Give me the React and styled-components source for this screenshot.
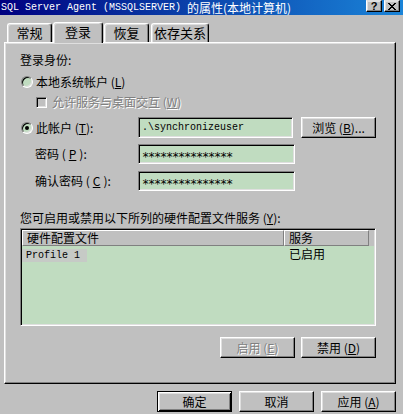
import React from 'react'
import styled, { createGlobalStyle, css } from 'styled-components'

const FACE = '#c0c0c0'
const WINDOW = '#c0dcc0'
const CJK = '"Noto Sans CJK SC", "Liberation Sans", sans-serif'
const MONO = '"Liberation Mono", "Noto Sans CJK SC", monospace'

const GlobalStyle = createGlobalStyle`
  html, body { margin: 0; padding: 0; }
  body {
    background: ${FACE};
    font-family: ${CJK};
    font-size: 12px;
    color: #000;
    overflow: hidden;
  }
`

const raised = css`
  border-style: solid;
  border-width: 1px;
  border-color: #fff #000 #000 #fff;
  box-shadow: inset -1px -1px 0 #808080, inset 1px 1px 0 #dfdfdf;
`

const sunken = css`
  border-style: solid;
  border-width: 1px;
  border-color: #808080 #fff #fff #808080;
  box-shadow: inset 1px 1px 0 #000, inset -1px -1px 0 #dfdfdf;
`

const disabledText = css`
  color: #808080;
  text-shadow: 1px 1px 0 #fff;
`

const Window = styled.div`
  width: 403px;
  height: 414px;
  display: flex;
  flex-direction: column;
  background: ${FACE};
`

const TitleBar = styled.div`
  height: 15px;
  display: flex;
  align-items: flex-start;
  padding: 0 3px 0 1px;
  background: linear-gradient(to right, #000080 0%, #0a3fa8 45%, #1a84d8 100%);
`

const TitleText = styled.div`
  flex: 1;
  height: 15px;
  display: flex;
  align-items: center;
  color: #fff;
  white-space: pre;
`

const TitleLatin = styled.span`
  font-family: ${MONO};
  font-size: 10px;
  line-height: 15px;
`

const TitleCjk = styled.span`
  font-family: ${CJK};
  font-size: 12px;
  line-height: 15px;
`

const CaptionButtons = styled.div`
  display: flex;
  gap: 2px;
`

const CaptionButton = styled.div`
  width: 16px;
  height: 12px;
  box-sizing: border-box;
  ${raised};
  border-top-color: #dfdfdf;
  background: ${FACE};
  display: flex;
  align-items: center;
  justify-content: center;
  font-family: "Liberation Sans", sans-serif;
  font-weight: bold;
  font-size: 11px;
  line-height: 10px;
`

const Body = styled.div`
  flex: 1;
  display: flex;
  flex-direction: column;
  padding: 7px 7px 0 4px;
`

const TabStrip = styled.div`
  height: 20px;
  display: flex;
  align-items: flex-end;
  padding-left: 3px;
`

const Tab = styled.div`
  position: relative;
  width: ${p => p.$w}px;
  height: ${p => (p.$active ? 21 : 19)}px;
  margin-right: ${p => p.$gap || 1}px;
  margin-bottom: ${p => (p.$active ? -1 : 0)}px;
  z-index: ${p => (p.$active ? 1 : 0)};
  box-sizing: border-box;
  background: ${FACE};
  border-top: 1px solid #fff;
  border-left: 1px solid #fff;
  border-right: 1px solid #000;
  border-radius: 3px 3px 0 0;
  box-shadow: inset -1px 0 0 #808080, inset 1px 1px 0 #dfdfdf;
  display: flex;
  align-items: center;
  justify-content: center;
  padding-bottom: ${p => (p.$active ? 2 : 0)}px;
  font-size: 13px;
  line-height: 14px;
`

const Panel = styled.div`
  width: 392px;
  height: 342px;
  box-sizing: border-box;
  ${raised};
  background: ${FACE};
  padding: 0 19px 0 15px;
  display: flex;
  flex-direction: column;
`

const GroupLabel = styled.div`
  margin-top: ${p => p.$top}px;
  height: 14px;
  line-height: 14px;
  white-space: nowrap;
`

const OptionRow = styled.div`
  margin-top: ${p => p.$top}px;
  margin-left: ${p => p.$indent || 0}px;
  height: ${p => p.$h}px;
  display: flex;
  align-items: center;
  gap: ${p => p.$gap || 3}px;
`

const RadioDot = styled.span`
  width: 12px;
  height: 12px;
  box-sizing: border-box;
  border-radius: 50%;
  ${sunken};
  background: ${WINDOW};
  display: flex;
  align-items: center;
  justify-content: center;
  &::after {
    content: '';
    width: 4px;
    height: 4px;
    border-radius: 50%;
    background: ${p => (p.$checked ? '#000' : 'transparent')};
  }
`

const CheckBox = styled.span`
  width: 11px;
  height: 11px;
  box-sizing: border-box;
  ${sunken};
  background: ${FACE};
`

const OptionLabel = styled.span`
  line-height: 14px;
  white-space: nowrap;
  ${p => p.$disabled && disabledText};
`

const FieldRow = styled.div`
  margin-top: ${p => p.$top}px;
  height: ${p => p.$h}px;
  display: flex;
  align-items: center;
`

const FieldLead = styled.div`
  width: ${p => 118 - (p.$pad || 0)}px;
  padding-left: ${p => p.$pad || 0}px;
  display: flex;
  align-items: center;
  gap: 3px;
  line-height: 14px;
  white-space: nowrap;
`

const TextBox = styled.div`
  width: ${p => p.$w}px;
  height: 100%;
  box-sizing: border-box;
  ${sunken};
  background: ${WINDOW};
  padding: 0 3px;
  display: flex;
  align-items: center;
  font-family: ${MONO};
  font-size: 10px;
  white-space: nowrap;
`

const Masked = styled.span`
  font-family: "DejaVu Sans Mono", monospace;
  font-size: 12px;
  letter-spacing: -1.22px;
  line-height: 12px;
  padding-top: 5px;
`

const Button = styled.div`
  width: 75px;
  height: 21px;
  box-sizing: border-box;
  ${raised};
  ${p => p.$default && css`
    border: 1px solid #000;
    box-shadow: inset 1px 1px 0 #fff, inset -1px -1px 0 #000, inset 2px 2px 0 #dfdfdf, inset -2px -2px 0 #808080;
  `};
  margin-left: ${p => p.$ml || 0}px;
  background: ${FACE};
  display: flex;
  align-items: center;
  justify-content: center;
  line-height: 14px;
  white-space: nowrap;
  ${p => p.$disabled && disabledText};
`

const List = styled.div`
  margin-top: 3px;
  height: 98px;
  box-sizing: border-box;
  ${sunken};
  padding: 1px;
  background: ${WINDOW};
  display: flex;
  flex-direction: column;
`

const ListHeader = styled.div`
  height: 16px;
  display: flex;
  background: ${FACE};
`

const HeaderCell = styled.div`
  width: ${p => p.$w}px;
  box-sizing: border-box;
  ${raised};
  border-right-color: #808080;
  border-bottom-color: #808080;
  box-shadow: none;
  padding-left: 4px;
  line-height: 14px;
  white-space: nowrap;
`

const ListRow = styled.div`
  margin-top: 1px;
  height: 14px;
  display: flex;
  align-items: center;
`

const ListCell = styled.div`
  width: ${p => p.$w}px;
  padding-left: ${p => p.$pad || 0}px;
  box-sizing: border-box;
  line-height: 14px;
  white-space: nowrap;
`

const ItemName = styled.span`
  display: inline-block;
  background: #c6cac6;
  padding: 0 7px 0 4px;
  font-family: ${MONO};
  font-size: 10px;
  line-height: 13px;
`

const ButtonRow = styled.div`
  margin-top: ${p => p.$top}px;
  display: flex;
  justify-content: flex-end;
  gap: ${p => p.$gap}px;
`

const CloseGlyph = () => (
  <svg width="8" height="7" viewBox="0 0 8 7" shapeRendering="crispEdges">
    <path d="M0 0h2v1h1v1h2v-1h1v-1h2v1h-1v1h-1v1h-1v1h1v1h1v1h1v1h-2v-1h-1v-1h-2v1h-1v1h-2v-1h1v-1h1v-1h1v-1h-1v-1h-1v-1h-1z" fill="#000" />
  </svg>
)

const App = () => {
  return (
    <Window>
      <GlobalStyle />
      <TitleBar>
        <TitleText>
          <TitleLatin>SQL Server Agent (MSSQLSERVER) </TitleLatin>
          <TitleCjk>的属性(本地计算机)</TitleCjk>
        </TitleText>
        <CaptionButtons>
          <CaptionButton>?</CaptionButton>
          <CaptionButton><CloseGlyph /></CaptionButton>
        </CaptionButtons>
      </TitleBar>
      <Body>
        <TabStrip>
          <Tab $w={45}>常规</Tab>
          <Tab $w={50} $active>登录</Tab>
          <Tab $w={45} $gap={2}>恢复</Tab>
          <Tab $w={58}>依存关系</Tab>
        </TabStrip>
        <Panel>
          <GroupLabel $top={10}>登录身份:</GroupLabel>
          <OptionRow $top={7} $h={16} $indent={1}>
            <RadioDot />
            <OptionLabel>本地系统帐户 (<u>L</u>)</OptionLabel>
          </OptionRow>
          <OptionRow $top={5} $h={14} $indent={16} $gap={5}>
            <CheckBox />
            <OptionLabel $disabled>允许服务与桌面交互 (<u>W</u>)</OptionLabel>
          </OptionRow>
          <FieldRow $top={8} $h={21}>
            <FieldLead $pad={1}>
              <RadioDot $checked />
              <span>此帐户 (<u>T</u>):</span>
            </FieldLead>
            <TextBox $w={155}>.\synchronizeuser</TextBox>
            <Button $ml={8}>浏览 (<u>B</u>)...</Button>
          </FieldRow>
          <FieldRow $top={6} $h={20}>
            <FieldLead $pad={15}>密码 (<u>P</u>):</FieldLead>
            <TextBox $w={157}><Masked>***************</Masked></TextBox>
          </FieldRow>
          <FieldRow $top={7} $h={20}>
            <FieldLead $pad={15}>确认密码 (<u>C</u>):</FieldLead>
            <TextBox $w={157}><Masked>***************</Masked></TextBox>
          </FieldRow>
          <GroupLabel $top={20}>您可启用或禁用以下所列的硬件配置文件服务 (<u>Y</u>):</GroupLabel>
          <List>
            <ListHeader>
              <HeaderCell $w={262}>硬件配置文件</HeaderCell>
              <HeaderCell $w={85}>服务</HeaderCell>
            </ListHeader>
            <ListRow>
              <ListCell $w={262}><ItemName>Profile 1</ItemName></ListCell>
              <ListCell $w={85} $pad={5}>已启用</ListCell>
            </ListRow>
          </List>
          <ButtonRow $top={11} $gap={6}>
            <Button $disabled>启用 (<u>E</u>)</Button>
            <Button>禁用 (<u>D</u>)</Button>
          </ButtonRow>
        </Panel>
        <ButtonRow $top={7} $gap={7}>
          <Button $default>确定</Button>
          <Button>取消</Button>
          <Button>应用 (<u>A</u>)</Button>
        </ButtonRow>
      </Body>
    </Window>
  )
}

export default App
